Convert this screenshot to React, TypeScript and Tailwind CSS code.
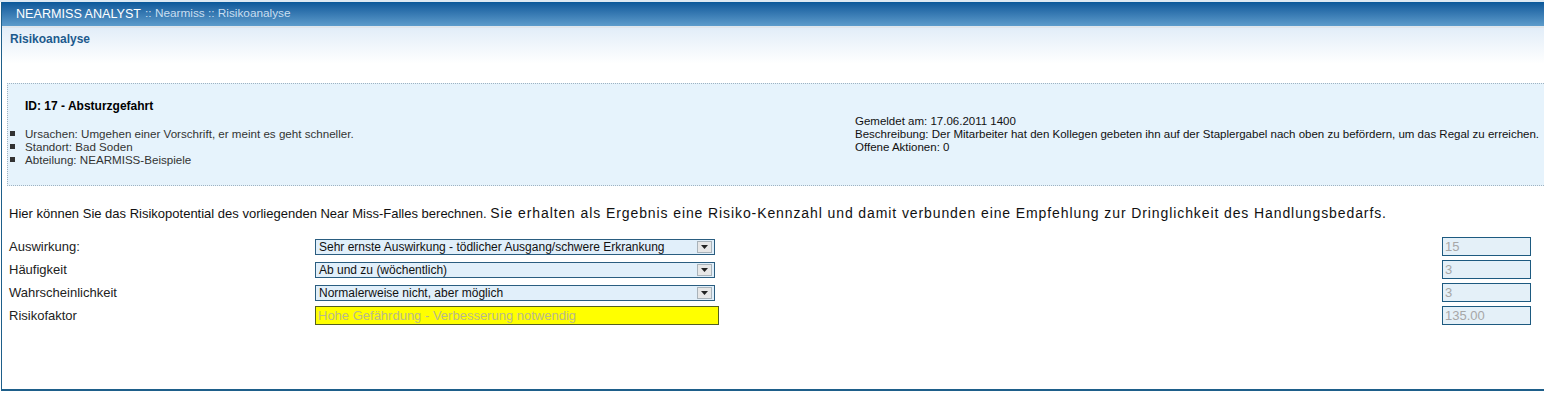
const rows = [
  { label: "Auswirkung:", value: "Sehr ernste Auswirkung - tödlicher Ausgang/schwere Erkrankung", score: "15" },
  { label: "Häufigkeit", value: "Ab und zu (wöchentlich)", score: "3" },
  { label: "Wahrscheinlichkeit", value: "Normalerweise nicht, aber möglich", score: "3" },
];

function SelectBox({ value }: { value: string }) {
  return (
    <div className="flex h-[16px] w-[400px] items-center justify-between border border-[#2a5d80] bg-[#e1effa] pl-[3px] pr-[2px]">
      <span className="text-[12px] leading-none text-[#111]">{value}</span>
      <span className="flex h-[12px] w-[15px] items-center justify-center border border-[#a9b3ba] bg-[#e7e7e7]">
        <svg width="7" height="4" viewBox="0 0 7 4">
          <path d="M0 0h7L3.5 4z" fill="#222" />
        </svg>
      </span>
    </div>
  );
}

function ScoreBox({ value }: { value: string }) {
  return (
    <div className="flex h-[19px] w-[89px] items-center border border-[#1d5a80] bg-[#e4f0f8] pl-[2px] text-[13px] text-[#a7a7a7]">
      {value}
    </div>
  );
}

export default function App() {
  return (
    <div className="h-[394px] w-[1544px] overflow-hidden border-t-2 border-[#dde9f3] bg-white pl-px font-['Liberation_Sans',Arial,sans-serif]">
      <div className="flex h-[389px] flex-col border-b-2 border-l border-[#1e5f8a]">
        <div className="flex h-[24px] items-center bg-gradient-to-b from-[#08589a] to-[#5d9ccb] pl-[14px]">
          <span className="text-[12.6px] text-white">NEARMISS ANALYST</span>
          <span className="ml-[4px] text-[11.8px] text-[#c9def0]">:: Nearmiss :: Risikoanalyse</span>
        </div>
        <div className="h-[2px] bg-[#dfe6ec]" />
        <div className="h-[55px] bg-[linear-gradient(to_bottom,#e2edf8_0%,#ffffff_65%)] px-[8px] pt-[2px]">
          <h1 className="text-[12px] font-bold text-[#1c5a8d]">Risikoanalyse</h1>
        </div>
        <div className="ml-[5px] flex h-[103px] border-y border-l border-dotted border-[#9fb3c2] bg-[#e6f3fc] text-[11.6px] leading-[13px] text-[#333]">
          <div className="w-[847px] pt-[16px]">
            <div className="pl-[17px] text-[12px] font-bold text-black">ID: 17 - Absturzgefahrt</div>
            <ul className="mt-[14px]">
              {[
                "Ursachen: Umgehen einer Vorschrift, er meint es geht schneller.",
                "Standort: Bad Soden",
                "Abteilung: NEARMISS-Beispiele",
              ].map((t) => (
                <li key={t} className="flex items-center">
                  <span className="ml-[2px] mr-[10px] h-[5px] w-[5px] bg-[#333]" />
                  {t}
                </li>
              ))}
            </ul>
          </div>
          <div className="whitespace-nowrap pt-[31px] text-[11.5px] text-[#111]">
            <div>Gemeldet am: 17.06.2011 1400</div>
            <div>
              Beschreibung: Der Mitarbeiter hat den Kollegen gebeten ihn auf der Staplergabel nach oben zu befördern, um das Regal zu erreichen.
            </div>
            <div>Offene Aktionen: 0</div>
          </div>
        </div>
        <p className="mt-[20px] h-[15px] whitespace-nowrap pl-[7px] text-[13px] leading-[15px] text-[#111]">
          Hier können Sie das Risikopotential des vorliegenden Near Miss-Falles berechnen.{" "}
          <span className="text-[14px] tracking-[0.9px]">
            Sie erhalten als Ergebnis eine Risiko-Kennzahl und damit verbunden eine Empfehlung zur Dringlichkeit des Handlungsbedarfs.
          </span>
        </p>
        <div className="mt-[16px] flex flex-col gap-[4px] pl-[7px] text-[13px] text-[#222]">
          {rows.map((r) => (
            <div key={r.label} className="flex h-[19px] items-center">
              <span className="w-[306px]">{r.label}</span>
              <SelectBox value={r.value} />
              <span className="flex-1" />
              <ScoreBox value={r.score} />
              <span className="w-[13px]" />
            </div>
          ))}
          <div className="flex h-[19px] items-center">
            <span className="w-[306px]">Risikofaktor</span>
            <div className="flex h-[19px] w-[404px] items-center border border-[#55601f] bg-[#ffff00] pl-[2px] text-[13px] text-[#b9b98a]">
              Hohe Gefährdung - Verbesserung notwendig
            </div>
            <span className="flex-1" />
            <ScoreBox value="135.00" />
            <span className="w-[13px]" />
          </div>
        </div>
      </div>
    </div>
  );
}
